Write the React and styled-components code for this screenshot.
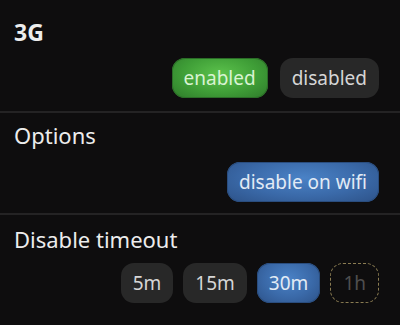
import styled, { createGlobalStyle, css } from "styled-components";

const Global = createGlobalStyle`
  html, body {
    margin: 0;
    padding: 0;
    background: #0e0d0e;
  }
  body {
    font-family: "Noto Sans", "Open Sans", sans-serif;
    color: #e6e6e6;
  }
`;

const Page = styled.div`
  width: 400px;
  height: 325px;
  overflow: hidden;
  background: #0e0d0e;
`;

const Section = styled.div`
  padding: ${(p) => p.$top}px 21px ${(p) => p.$bottom}px 14px;
  border-bottom: 2px solid #242324;
  &:last-child {
    border-bottom: none;
  }
`;

const Title = styled.div`
  font-size: ${(p) => (p.$bold ? 23 : 22)}px;
  line-height: 28px;
  font-weight: ${(p) => (p.$bold ? 700 : 400)};
  color: #ececec;
`;

const Row = styled.div`
  display: flex;
  justify-content: flex-end;
  gap: ${(p) => p.$gap || 11}px;
  margin-top: ${(p) => p.$top || 10}px;
`;

const variants = {
  green: css`
    background: radial-gradient(ellipse at 50% 40%, #5cc24c 0%, #3f9e37 55%, #2e7a2a 100%);
    color: #d9f3d2;
    box-shadow: inset 0 0 0 1px #2b6d27;
  `,
  blue: css`
    background: radial-gradient(ellipse at 50% 40%, #4a82c6 0%, #3a69a8 55%, #2d5288 100%);
    color: #e2ebf5;
    box-shadow: inset 0 0 0 1px #2a4d7e;
  `,
  dark: css`
    background: #282828;
    color: #d6d6d6;
  `,
  dashed: css`
    background: transparent;
    color: #4e4e4e;
    border: 1.5px dashed #8a7c52;
  `,
};

const Pill = styled.div`
  box-sizing: border-box;
  height: 40px;
  padding: 0 12px;
  border-radius: 13px;
  display: flex;
  align-items: center;
  justify-content: center;
  font-size: 19px;
  ${(p) => variants[p.$kind || "dark"]}
`;

const App = () => {
  return (
    <Page>
      <Global />
      <Section $top={18} $bottom={13}>
        <Title $bold>3G</Title>
        <Row $top={12} $gap={12}>
          <Pill $kind="green">enabled</Pill>
          <Pill>disabled</Pill>
        </Row>
      </Section>
      <Section $top={8} $bottom={11}>
        <Title>Options</Title>
        <Row $top={13}>
          <Pill $kind="blue">disable on wifi</Pill>
        </Row>
      </Section>
      <Section $top={10} $bottom={10}>
        <Title>Disable timeout</Title>
        <Row $top={10} $gap={10}>
          <Pill>5m</Pill>
          <Pill>15m</Pill>
          <Pill $kind="blue">30m</Pill>
          <Pill $kind="dashed">1h</Pill>
        </Row>
      </Section>
    </Page>
  );
};

export default App;
